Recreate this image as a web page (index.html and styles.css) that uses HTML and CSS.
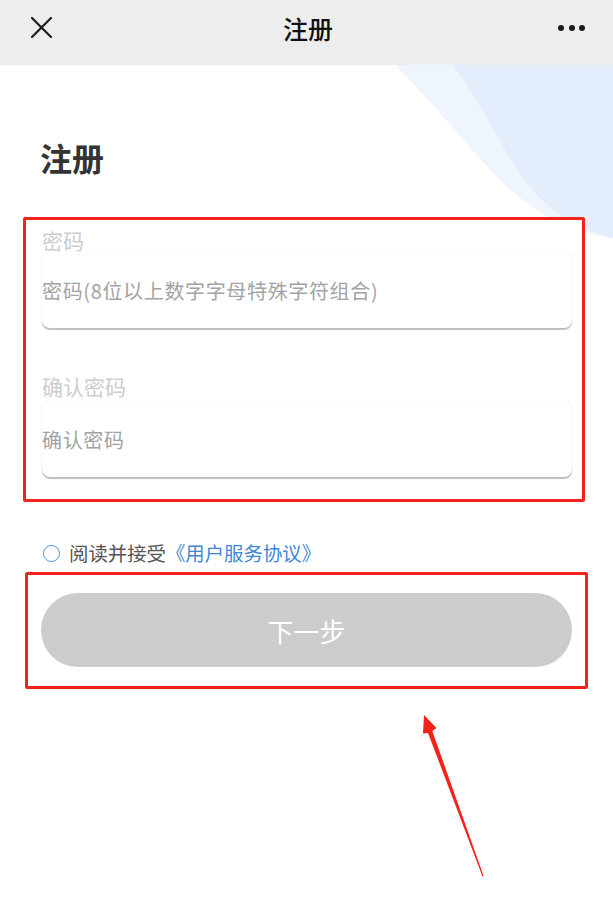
FILE: index.html
```html
<!DOCTYPE html>
<html lang="zh-CN">
<head>
    <meta charset="UTF-8">
    <meta name="viewport" content="width=device-width, initial-scale=1.0">
    <title>注册</title>
    <link rel="stylesheet" href="styles.css">
</head>
<body>
    <header class="nav">
        <button class="nav-close" aria-label="关闭">
            <svg width="21" height="21" viewBox="0 0 21 21">
                <path d="M1 1 L20 20 M20 1 L1 20" stroke="#1c1c1c" stroke-width="2.2" stroke-linecap="round" fill="none"/>
            </svg>
        </button>
        <h1 class="nav-title">注册</h1>
        <button class="nav-more" aria-label="更多">
            <span></span><span></span><span></span>
        </button>
    </header>

    <main class="page">
        <!-- decorative waves in the top right corner -->
        <svg class="page-bg" width="613" height="180" viewBox="0 0 613 180">
            <path d="M395 0 C440 45 470 85 505 120 C535 148 570 168 613 173 L613 0 Z" fill="#eff5fd"/>
            <path d="M453 0 C480 35 500 80 515 100 C535 135 565 160 613 173 L613 0 Z" fill="#e3edfb"/>
        </svg>

        <h2 class="page-title">注册</h2>

        <div class="mark fields">
            <div class="field">
                <label class="field-label" for="pwd">密码</label>
                <div class="field-box">
                    <input id="pwd" type="password" placeholder="密码(8位以上数字字母特殊字符组合)">
                </div>
            </div>
            <div class="field field-second">
                <label class="field-label" for="pwd2">确认密码</label>
                <div class="field-box">
                    <input id="pwd2" type="password" placeholder="确认密码">
                </div>
            </div>
        </div>

        <div class="agree">
            <span class="agree-check"></span>
            <span class="agree-text">阅读并接受</span>
            <a class="agree-link" href="#">《用户服务协议》</a>
        </div>

        <div class="mark next-wrap">
            <button class="next-btn" disabled>下一步</button>
        </div>
    </main>

    <!-- annotation arrow pointing at the button -->
    <svg class="arrow" width="613" height="913" viewBox="0 0 613 913">
        <polygon points="424,715 436.5,728 432.3,731 483.6,876 482.4,876.3 428,733 423,733.5" fill="#f5221b"/>
    </svg>
</body>
</html>
```

FILE: styles.css
```css
body {
    margin: 0;
    font-family: "Noto Sans CJK SC", "Noto Sans", sans-serif;
    background-color: #fff;
    width: 613px;
    min-height: 913px;
    position: relative;
    overflow: hidden;
}

.nav {
    height: 65px;
    box-sizing: border-box;
    padding: 0 28px 10px 31px;
    background-color: #ededed;
    display: grid;
    grid-template-columns: 1fr auto 1fr;
    align-items: center;
}

.nav button {
    border: none;
    background: none;
    padding: 0;
    cursor: pointer;
}

.nav-close {
    justify-self: start;
    display: flex;
}

.nav-title {
    margin: 0;
    font-size: 25px;
    font-weight: 500;
    line-height: 30px;
    color: #111;
}

.nav-more {
    justify-self: end;
    display: flex;
    gap: 4.5px;
}

.nav-more span {
    width: 6px;
    height: 6px;
    border-radius: 50%;
    background-color: #1c1c1c;
}

.page {
    position: relative;
    padding-top: 74px;
}

.page-bg {
    position: absolute;
    top: 0;
    left: 0;
}

.page-title {
    position: relative;
    margin: 0;
    padding-left: 40px;
    font-size: 32px;
    line-height: 36px;
    font-weight: 700;
    color: #333;
}

.mark {
    position: relative;
    box-sizing: border-box;
    border: 3px solid #f5221b;
    border-radius: 2px;
}

.fields {
    margin: 42px 0 0 23px;
    width: 562px;
    padding: 10px 10px 22px 16px;
    background-color: #fff;
}

.field-label {
    display: block;
    font-size: 21px;
    line-height: 21px;
    color: #cdcdcd;
    margin-bottom: 1px;
}

.field-second {
    margin-top: 48px;
}

.field-second .field-label {
    margin-bottom: 4px;
}

.field-box {
    height: 76px;
    border-radius: 8px;
    background-color: #fff;
    box-shadow: 0 0 1px rgba(0, 0, 0, 0.12), 0 1.5px 1px rgba(0, 0, 0, 0.25);
    display: flex;
    align-items: center;
}

.field-box input {
    width: 100%;
    border: none;
    outline: none;
    padding: 0;
    background: none;
    font-family: inherit;
    font-size: 20px;
    letter-spacing: 0.65px;
    color: #333;
}

.field-box input::placeholder {
    color: #a3a3a3;
}

.agree {
    margin: 39px 0 0 43px;
    height: 24px;
    display: flex;
    align-items: center;
    font-size: 19.4px;
    line-height: 24px;
}

.agree-check {
    width: 15px;
    height: 15px;
    border: 1.8px solid #4a8fd8;
    border-radius: 50%;
    margin-right: 9px;
}

.agree-text {
    color: #555;
}

.agree-link {
    color: #3f86d6;
    text-decoration: none;
}

.next-wrap {
    margin: 7px 0 0 25px;
    width: 563px;
    padding: 18px 0 19px 13px;
}

.next-btn {
    display: block;
    width: 531px;
    height: 74px;
    border: none;
    border-radius: 37px;
    background-color: #cccccc;
    color: #fff;
    font-family: inherit;
    font-size: 26px;
    font-weight: 400;
}

.arrow {
    position: absolute;
    top: 0;
    left: 0;
    pointer-events: none;
}
```
